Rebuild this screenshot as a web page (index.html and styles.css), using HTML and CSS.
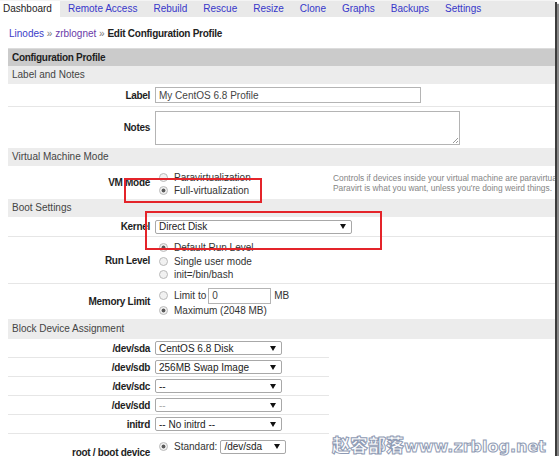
FILE: index.html
```html
<!DOCTYPE html>
<html>
<head>
<meta charset="utf-8">
<title>Edit Configuration Profile</title>
<link rel="stylesheet" href="styles.css">
</head>
<body>
<div class="frame">
  <nav class="tabs">
    <span class="tab active">Dashboard</span>
    <span class="tab">Remote Access</span>
    <span class="tab">Rebuild</span>
    <span class="tab">Rescue</span>
    <span class="tab">Resize</span>
    <span class="tab">Clone</span>
    <span class="tab">Graphs</span>
    <span class="tab">Backups</span>
    <span class="tab">Settings</span>
  </nav>

  <div class="crumb">
    <a class="lnk">Linodes</a> <span class="raquo">»</span> <a class="lnk visited">zrblognet</a> <span class="raquo">»</span> <b>Edit Configuration Profile</b>
  </div>
  <div class="rule"></div>

  <div class="form">
    <div class="head">Configuration Profile</div>
    <div class="sub">Label and Notes</div>
    <div class="row sep h-label">
      <div class="lbl">Label</div>
      <div class="fld"><span class="input w-label">My CentOS 6.8 Profile</span></div>
    </div>
    <div class="row h-notes">
      <div class="lbl">Notes</div>
      <div class="fld"><span class="textarea"><span class="grip"></span></span></div>
    </div>

    <div class="sub">Virtual Machine Mode</div>
    <div class="row h-vm">
      <div class="lbl">VM Mode</div>
      <div class="fld opts vm-opts">
        <div class="opt"><span class="radio"></span>Paravirtualization</div>
        <div class="opt"><span class="radio on"></span>Full-virtualization</div>
      </div>
      <div class="desc">Controls if devices inside your virtual machine are paravirtualized or fully virtualized.<br>Paravirt is what you want, unless you're doing weird things.</div>
    </div>

    <div class="sub">Boot Settings</div>
    <div class="row sep h-kernel">
      <div class="lbl">Kernel</div>
      <div class="fld"><span class="sel w-kernel">Direct Disk</span></div>
    </div>
    <div class="row sep h-run">
      <div class="lbl">Run Level</div>
      <div class="fld opts run-opts">
        <div class="opt"><span class="radio on"></span>Default Run Level</div>
        <div class="opt"><span class="radio"></span>Single user mode</div>
        <div class="opt"><span class="radio"></span>init=/bin/bash</div>
      </div>
    </div>
    <div class="row h-mem">
      <div class="lbl">Memory Limit</div>
      <div class="fld opts mem-opts">
        <div class="opt"><span class="radio"></span>Limit to <span class="input w-mem">0</span> MB</div>
        <div class="opt"><span class="radio on"></span>Maximum (2048 MB)</div>
      </div>
    </div>

    <div class="sub sub-block">Block Device Assignment</div>
    <div class="devs">
      <div class="row sep h-dev">
        <div class="lbl">/dev/sda</div>
        <div class="fld"><span class="sel w-dev">CentOS 6.8 Disk</span></div>
      </div>
      <div class="row sep h-dev">
        <div class="lbl">/dev/sdb</div>
        <div class="fld"><span class="sel w-dev">256MB Swap Image</span></div>
      </div>
      <div class="row sep h-dev">
        <div class="lbl">/dev/sdc</div>
        <div class="fld"><span class="sel w-dev">--</span></div>
      </div>
      <div class="row sep h-dev">
        <div class="lbl">/dev/sdd</div>
        <div class="fld"><span class="sel w-dev dim">--</span></div>
      </div>
      <div class="row sep h-dev">
        <div class="lbl">initrd</div>
        <div class="fld"><span class="sel w-dev">-- No initrd --</span></div>
      </div>
      <div class="row h-root">
        <div class="lbl">root / boot device</div>
        <div class="fld opts root-opts">
          <div class="opt"><span class="radio on"></span>Standard: <span class="sel w-root">/dev/sda</span></div>
          <div class="opt"><span class="radio"></span></div>
        </div>
      </div>
    </div>
  </div>

  <div class="mark mark-vm"></div>
  <div class="mark mark-kernel"></div>
  <div class="watermark"><span class="wm-cjk">赵容部落</span><span class="wm-lat">www.zrblog.net</span></div>
</div>
</body>
</html>
```

FILE: styles.css
```css
* { box-sizing: border-box; }

body {
  margin: 0;
  background: #fff;
  font-family: "Liberation Sans", Arial, sans-serif;
  font-size: 10px;
  color: #333;
}

.frame {
  width: 555px;
  height: 456px;
  overflow: hidden;
  position: relative;
  background: #fff;
  box-shadow: 2px 2px 0 #3c3c3c, 4px 4px 1px #8a8a8a;
}

/* tabs */
.tabs {
  display: flex;
  height: 17px;
  background: #e9e9e9;
  border-top: 1px solid #f4f4f4;
}
.tab {
  padding: 0 8px;
  line-height: 16px;
  color: #3737c9;
  white-space: nowrap;
}
.tab.active {
  background: #fff;
  color: #222;
  padding-left: 3px;
}

/* breadcrumb */
.crumb {
  height: 31px;
  padding: 11px 0 0 9px;
  line-height: 12px;
  color: #222;
}
.crumb b { font-size: 10px; letter-spacing: -0.25px; }
.lnk { color: #3c3cc8; }
.lnk.visited { color: #6a3aa8; }
.raquo { color: #777; }

.rule {
  margin-left: 8px;
  border-top: 1px solid #dcdcdc;
}

/* form */
.form { margin-left: 8px; }

.head {
  height: 17px;
  line-height: 17px;
  padding-left: 4px;
  background: #cbcbcb;
  color: #1e1e1e;
  font-weight: bold;
  font-size: 10px;
  letter-spacing: -0.3px;
}
.sub {
  height: 18px;
  line-height: 18px;
  padding-left: 4px;
  background: #ececec;
  color: #444;
}
.sub-block { height: 20px; line-height: 20px; }

.row {
  display: flex;
  align-items: center;
}
.row.sep { border-bottom: 1px solid #e6e6e6; }

.lbl {
  width: 147px;
  flex: none;
  padding-right: 5px;
  text-align: right;
  font-weight: bold;
  font-size: 10px;
  letter-spacing: -0.3px;
  color: #1e1e1e;
  white-space: nowrap;
}
.fld { display: flex; align-items: center; flex: none; }

.h-label { height: 23px; }
.h-notes { height: 41px; }
.h-vm { height: 33px; }
.h-kernel { height: 20px; }
.h-run { height: 47px; }
.h-mem { height: 35px; }
.h-dev { height: 19px; }
.h-root { height: 36px; }
.devs { width: 321px; }

/* inputs */
.input {
  display: inline-flex;
  align-items: center;
  height: 16px;
  padding-left: 3px;
  border: 1px solid #b4b4b4;
  background: #fff;
  color: #444;
  font-size: 10px;
}
.w-label { width: 266px; }
.w-mem { width: 63px; margin: 0 3px 0 2px; }

.textarea {
  display: block;
  position: relative;
  width: 305px;
  height: 34px;
  border: 1px solid #b4b4b4;
  background: #fff;
}
.grip {
  position: absolute;
  right: 1px;
  bottom: 1px;
  width: 5px;
  height: 5px;
  background: linear-gradient(135deg, transparent 45%, #999 46%, #999 54%, transparent 55%, transparent 70%, #999 71%, #999 80%, transparent 81%);
}

.sel {
  display: inline-flex;
  align-items: center;
  justify-content: space-between;
  height: 14px;
  padding: 0 5px 0 3px;
  border: 1px solid #a8a8a8;
  border-radius: 2px;
  background: #fff;
  color: #222;
  font-size: 10px;
  white-space: nowrap;
}
.sel::after {
  content: "";
  border-left: 3px solid transparent;
  border-right: 3px solid transparent;
  border-top: 5px solid #111;
}
.sel.dim { color: #aaa; }
.w-kernel { width: 197px; }
.w-dev { width: 127px; }
.w-root { width: 66px; margin-left: 3px; }

/* options */
.opts {
  flex-direction: column;
  align-items: flex-start;
}
.opt {
  display: flex;
  align-items: center;
  color: #333;
  white-space: nowrap;
}
.vm-opts { width: 178px; padding-top: 3px; }
.vm-opts .opt { height: 13px; }
.run-opts { padding-top: 2px; }
.run-opts .opt { height: 13.5px; }
.mem-opts { padding-top: 3px; }
.mem-opts .opt { height: 15px; }
.root-opts { align-self: flex-start; }
.root-opts .opt { height: 15px; }
.root-opts .opt:first-child { margin-top: 5px; }

.radio {
  width: 9px;
  height: 9px;
  flex: none;
  margin: 0 6px 0 4px;
  border: 1px solid #b9b9b9;
  border-radius: 50%;
  background: #f1f1f1;
}
.radio.on {
  background: radial-gradient(circle, #5a5a5a 0 1.6px, #f1f1f1 2.3px);
}

.desc {
  flex: 1;
  min-width: 0;
  overflow: hidden;
  color: #858585;
  font-size: 8.4px;
  line-height: 10px;
  white-space: nowrap;
  padding-top: 1px;
}

/* annotations */
.mark {
  position: absolute;
  border: 2px solid #e4242a;
}
.mark-vm { left: 124px; top: 178px; width: 138px; height: 25px; }
.mark-kernel { left: 145px; top: 211px; width: 237px; height: 39px; }

.watermark {
  position: absolute;
  left: 332px;
  top: 436px;
  display: flex;
  align-items: baseline;
  line-height: 17px;
  white-space: nowrap;
  color: #fff;
  -webkit-text-stroke: 1px #8f9bb4;
  font-weight: bold;
}
.wm-cjk {
  font-family: "Noto Sans CJK SC", sans-serif;
  font-size: 18px;
  font-weight: 900;
}
.wm-lat {
  font-family: "DejaVu Sans", sans-serif;
  font-size: 16px;
}
```
